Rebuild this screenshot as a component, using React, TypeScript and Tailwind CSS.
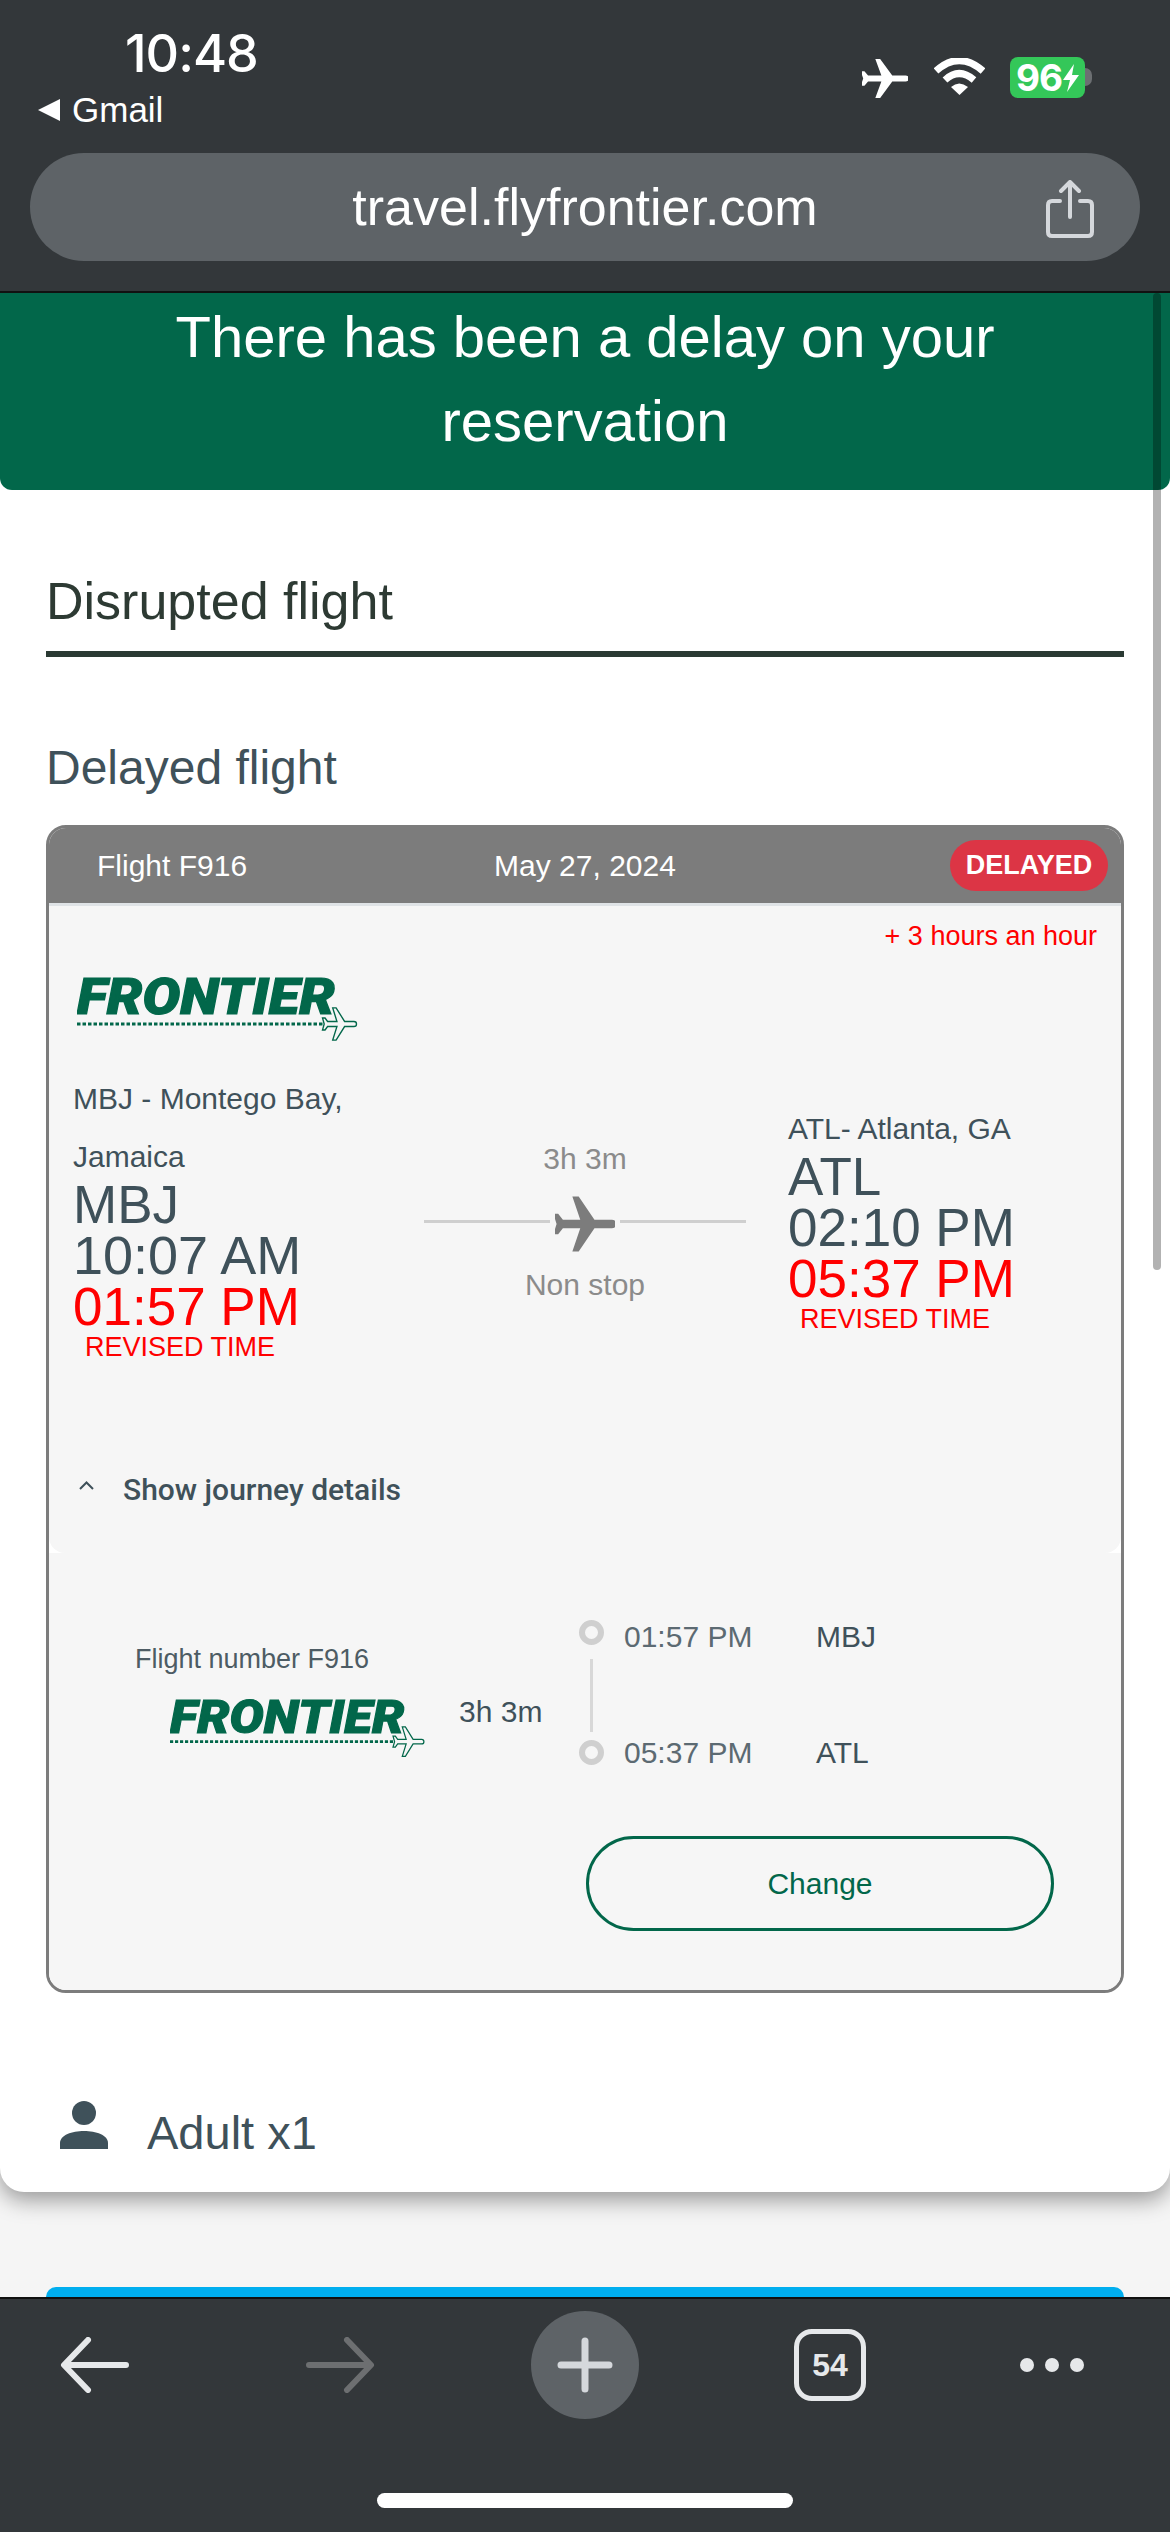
const PLANE = 'M21 16v-2l-8-5V3.5c0-.83-.67-1.5-1.5-1.5S10 2.67 10 3.5V9l-8 5v2l8-2.5V19l-2 1.5V22l3.5-1 3.5 1v-1.5L13 19v-5.5l8 2.5z'

function PlaneIcon({ className }: { className: string }) {
  return (
    <svg viewBox="2 2 19 20" className={className} preserveAspectRatio="none">
      <g transform="rotate(90 11.5 12)">
        <path d={PLANE} fill="currentColor" />
      </g>
    </svg>
  )
}

function Logo({ className }: { className: string }) {
  return (
    <svg viewBox="0 0 284 66" className={className}>
      <text
        x="0"
        y="38"
        fontFamily="Roboto, sans-serif"
        fontWeight="900"
        fontStyle="italic"
        fontSize="50"
        textLength="258"
        lengthAdjust="spacingAndGlyphs"
        fill="#02674a"
        stroke="#02674a"
        strokeWidth="1.2"
      >
        FRONTIER
      </text>
      <line x1="0" y1="48" x2="246" y2="48" stroke="#02674a" strokeWidth="3" strokeDasharray="3.5 2" />
      <g transform="translate(262.500 48) rotate(90) scale(1.7) translate(-11.500 -12)">
        <path d={PLANE} fill="#f6f6f6" stroke="#02674a" strokeWidth="0.8" />
      </g>
    </svg>
  )
}

function StatusBar() {
  return (
    <header className="h-[293px] shrink-0 bg-[#33373a] border-b-2 border-[#111] text-white flex flex-col">
      <div className="flex justify-between h-[153px]">
        <div className="pl-[38px]">
          <div className="pl-[87px] pt-[23px] h-[85px] text-[52px] leading-[62px] font-medium font-['Inter',sans-serif] tracking-[-1px]">10:48</div>
          <div className="flex items-center gap-[12px] h-[50px] text-[35px] font-['Liberation_Sans',sans-serif]">
            <span className="w-0 h-0 border-y-[11px] border-y-transparent border-r-[22px] border-r-white" />
            Gmail
          </div>
        </div>
        <div className="flex items-start pt-[57px] pr-[85px]">
          <PlaneIcon className="w-[46px] h-[41px] mt-[1px] text-white" />
          <svg viewBox="0 0 51 37" className="w-[51px] h-[37px] ml-[26px] mt-[1px]">
            <path d="M2 13 Q25 -8 49 13" fill="none" stroke="white" strokeWidth="7" />
            <path d="M11 22 Q25 9 40 22" fill="none" stroke="white" strokeWidth="7" />
            <path d="M17 29 Q25 22 34 29 L25.500 37 Z" fill="white" />
          </svg>
          <div className="relative ml-[25px] w-[75px] h-[41px] rounded-[8px] bg-[#34c759] flex items-center pl-[6px] text-[37px] leading-none font-bold font-['Inter',sans-serif] tracking-[-1px]">
            96
            <svg viewBox="0 0 18 28" className="w-[18px] h-[28px]">
              <path d="M12 0 L1 16 H8 L5 28 L17 11 H10 Z" fill="white" />
            </svg>
            <span className="absolute left-[75px] top-[11px] w-[7px] h-[18px] rounded-r-full bg-[#6c6f72]" />
          </div>
        </div>
      </div>
      <div className="mx-[30px] h-[108px] rounded-full bg-[#5e6367] relative flex items-center justify-center text-[52px] font-['Liberation_Sans',sans-serif]">
        travel.flyfrontier.com
        <svg viewBox="0 0 48 58" className="absolute right-[46px] top-[27px] w-[48px] h-[58px]" fill="none" stroke="#d5d8dc" strokeWidth="4" strokeLinecap="round" strokeLinejoin="round">
          <path d="M14 21 H6 Q2 21 2 25 V52 Q2 56 6 56 H42 Q46 56 46 52 V25 Q46 21 42 21 H34" />
          <path d="M24 37 V3 M15 11 L24 2 L33 11" />
        </svg>
      </div>
    </header>
  )
}

function Toolbar() {
  return (
    <footer className="h-[235px] shrink-0 bg-[#33373a] border-t-2 border-[#111] flex flex-col">
      <div className="flex items-center h-[132px] pl-[60px]">
        <svg viewBox="0 0 70 56" className="w-[70px] h-[56px]" fill="none" stroke="#e6e8ea" strokeWidth="6" strokeLinecap="round" strokeLinejoin="round">
          <path d="M66 28 H6 M28 3 L4 28 L28 53" />
        </svg>
        <svg viewBox="0 0 70 56" className="ml-[175px] w-[70px] h-[56px]" fill="none" stroke="#6d6f71" strokeWidth="6" strokeLinecap="round" strokeLinejoin="round">
          <path d="M4 28 H64 M42 3 L66 28 L42 53" />
        </svg>
        <div className="ml-[156px] w-[108px] h-[108px] rounded-full bg-[#5e6367] flex items-center justify-center">
          <svg viewBox="0 0 56 56" className="w-[56px] h-[56px]" stroke="#d5d8dc" strokeWidth="7" strokeLinecap="round">
            <path d="M28 4 V52 M4 28 H52" />
          </svg>
        </div>
        <div className="ml-[155px] w-[72px] h-[72px] rounded-[18px] border-[5px] border-[#e6e8ea] flex items-center justify-center text-[#e6e8ea] text-[32px] font-bold font-['Liberation_Sans',sans-serif]">54</div>
        <div className="ml-[154px] flex gap-[11px]">
          <span className="w-[14px] h-[14px] rounded-full bg-[#e6e8ea]" />
          <span className="w-[14px] h-[14px] rounded-full bg-[#e6e8ea]" />
          <span className="w-[14px] h-[14px] rounded-full bg-[#e6e8ea]" />
        </div>
      </div>
      <div className="mt-[62px] mx-auto w-[416px] h-[15px] rounded-full bg-white" />
    </footer>
  )
}

function FlightCard() {
  return (
    <div className="mt-[30px] border-[3px] border-[#7c7c7c] rounded-[20px] overflow-hidden bg-white">
      <div className="h-[78px] bg-[#7c7c7c] border-b-[3px] border-[#dfe3e6] grid grid-cols-[1fr_auto_1fr] items-center px-[13px] text-white text-[30px]">
        <span className="pl-[35px]">Flight F916</span>
        <span>May 27, 2024</span>
        <span className="justify-self-end h-[51px] w-[158px] rounded-full bg-[#dc3545] flex items-center justify-center font-bold text-[27px]">DELAYED</span>
      </div>

      <div className="bg-[#f6f6f6] rounded-b-[16px] pt-[14px] pb-[47px]">
        <div className="text-right pr-[24px] text-[27px] leading-[32px] text-[#ff0000]">+ 3 hours an hour</div>
        <Logo className="ml-[28px] mt-[24px] w-[284px] h-[66px]" />
        <div className="mt-[28px] pl-[24px] grid grid-cols-[351px_322px_1fr]">
          <div className="text-[#3f515a]">
            <div className="h-[109px] pr-[60px] text-[30px] leading-[58px]">MBJ - Montego Bay, Jamaica</div>
            <div className="text-[53px] leading-[51px]">MBJ</div>
            <div className="text-[54px] leading-[51px]">10:07 AM</div>
            <div className="text-[53px] leading-[51px] text-[#ff0000]">01:57 PM</div>
            <div className="pl-[12px] text-[27px] leading-[30px] text-[#ff0000]">REVISED TIME</div>
          </div>
          <div className="pt-[73px] flex flex-col items-center text-[#8b8b8b]">
            <div className="text-[30px] leading-[32px]">3h 3m</div>
            <div className="mt-[19px] w-full flex items-center h-[60px]">
              <span className="flex-1 h-[3px] mb-[6px] bg-[#cfcfcf]" />
              <PlaneIcon className="w-[60px] h-[58px] mx-[5px] text-[#7c7c7c]" />
              <span className="flex-1 h-[3px] mb-[6px] bg-[#cfcfcf]" />
            </div>
            <div className="mt-[14px] text-[30px] leading-[34px]">Non stop</div>
          </div>
          <div className="pl-[42px] pt-[37px] text-[#3f515a]">
            <div className="text-[30px] leading-[44px]">ATL- Atlanta, GA</div>
            <div className="text-[53px] leading-[51px]">ATL</div>
            <div className="text-[53px] leading-[51px]">02:10 PM</div>
            <div className="text-[53px] leading-[51px] text-[#ff0000]">05:37 PM</div>
            <div className="pl-[12px] text-[27px] leading-[30px] text-[#ff0000]">REVISED TIME</div>
          </div>
        </div>
        <div className="mt-[110px] pl-[30px] flex items-center h-[34px] text-[#3f515a]">
          <svg viewBox="0 0 15 9" className="w-[15px] h-[9px] mb-[8px]" fill="none" stroke="#3f515a" strokeWidth="2">
            <path d="M1 8 L7.500 1.500 L14 8" />
          </svg>
          <span className="ml-[29px] text-[30px] font-medium font-['Roboto',sans-serif]">Show journey details</span>
        </div>
      </div>

      <div className="bg-[#f6f6f6] pt-[63px] pb-[59px]">
        <div className="grid grid-cols-[410px_120px_1fr]">
          <div className="pl-[86px] pt-[27px]">
            <div className="text-[27px] leading-[32px] text-[#4d5c64]">Flight number F916</div>
            <Logo className="ml-[35px] mt-[23px] w-[258px] h-[60px]" />
          </div>
          <div className="pt-[80px] text-[30px] leading-[32px] text-[#3f515a]">3h 3m</div>
          <div className="text-[30px] text-[#3f515a]">
            <div className="flex items-center h-[40px]">
              <span className="w-[25px] h-[25px] mb-[8px] rounded-full border-[6px] border-[#cfcfcf]" />
              <span className="ml-[20px] w-[192px] text-[#5c6a72]">01:57 PM</span>
              <span>MBJ</span>
            </div>
            <div className="ml-[11px] mt-[3px] h-[73px] w-[3px] bg-[#d8d8d8]" />
            <div className="flex items-center h-[40px]">
              <span className="w-[25px] h-[25px] rounded-full border-[6px] border-[#cfcfcf]" />
              <span className="ml-[20px] w-[192px] text-[#5c6a72]">05:37 PM</span>
              <span>ATL</span>
            </div>
          </div>
        </div>
        <div className="mt-[64px] pr-[67px] flex justify-end">
          <button className="w-[468px] h-[95px] rounded-[48px] border-[3px] border-[#02674a] text-[#02674a] text-[30px]">Change</button>
        </div>
      </div>
    </div>
  )
}

export default function App() {
  return (
    <div className="h-[2532px] w-[1170px] flex flex-col overflow-hidden font-['Liberation_Sans',sans-serif] bg-[#f5f5f5]">
      <StatusBar />
      <main className="relative flex-1 overflow-hidden">
        <div className="bg-white rounded-b-[24px] shadow-[0_8px_22px_rgba(0,0,0,0.38)]">
          <div className="h-[197px] bg-[#02674a] rounded-b-[12px] flex items-center justify-center text-center text-white text-[58px] leading-[84px] px-[100px] pb-[26px]">
            There has been a delay on your reservation
          </div>
          <div className="px-[46px] pt-[80px] pb-[32px]">
            <h1 className="text-[52px] leading-[62px] text-[#2d3a33]">Disrupted flight</h1>
            <div className="mt-[19px] h-[6px] bg-[#2a3a33]" />
            <h2 className="mt-[84px] text-[48px] leading-[54px] text-[#3f515a]">Delayed flight</h2>
            <FlightCard />
            <div className="mt-[113px] flex items-center h-[54px] text-[47px] text-[#3f515a]">
              <svg viewBox="0 0 48 48" className="ml-[14px] w-[48px] h-[48px] mb-[16px]" fill="#3f515a">
                <circle cx="24" cy="12" r="12" />
                <path d="M0 48 V42 C0 34 12 30 24 30 C36 30 48 34 48 42 V48 Z" />
              </svg>
              <span className="ml-[39px]">Adult x1</span>
            </div>
          </div>
        </div>
        <div className="mx-[46px] mt-[95px] h-[40px] rounded-t-[10px] bg-[#00aeef]" />
        <div className="absolute left-[1153px] top-0 w-[8px] h-[977px] rounded-full bg-black/30" />
      </main>
      <Toolbar />
    </div>
  )
}
